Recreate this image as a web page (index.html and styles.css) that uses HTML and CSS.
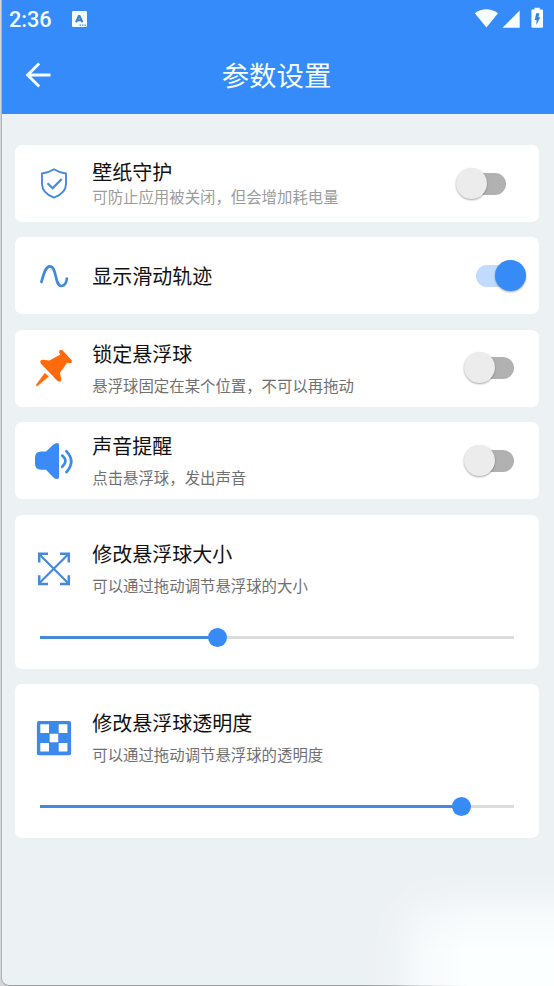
FILE: index.html
```html
<!DOCTYPE html>
<html lang="zh-CN">
<head>
<meta charset="utf-8">
<title>参数设置</title>
<link rel="stylesheet" href="styles.css">
</head>
<body>
<div class="screen">
  <header class="header">
    <div class="status">
      <span class="time">2:36</span>
      <svg class="ime" width="15" height="16" viewBox="0 0 15 16"><rect width="15" height="16" rx="1.2" fill="#f5ffff"/><path d="M4 11.200 7.200 4.500 10.400 11.200M5.200 9.200h4" fill="none" stroke="#3f7fd0" stroke-width="2.100" stroke-linejoin="bevel"/><path d="M7.500 14.200h1.500M10 14.200h1.500M12.500 14.200h1.300" stroke="#4a8be0" stroke-width="1.200"/></svg>
      <svg class="signals" width="70" height="22" viewBox="0 0 70 22" fill="#f8ffff"><path d="M.8 6.200C7.500 .9 17.200 .9 24 6.200L12.400 20.400Z"/><path d="M45.700 3.500V20.700H28.500Z"/><path d="M60.500 .8h5.300v1.700h2.200q1 0 1 1v16.200q0 1-1 1h-9.600q-1 0-1-1V3.500q0-1 1-1h2.100Z"/><path d="M62.200 6.300h3.300l-1.100 4h2l-4.200 7.700.4-5.100h-1.900Z" fill="#3a80d8"/></svg>
    </div>
    <div class="toolbar">
      <svg class="back" width="26" height="26" viewBox="0 0 26 26" fill="none" stroke="#f5ffff" stroke-width="2.900"><path d="M25.500 13H3M14.200 1.500 2.600 13l11.600 11.500"/></svg>
      <h1>参数设置</h1>
    </div>
  </header>

  <main class="settings">
    <section class="card">
      <div class="row">
        <svg class="icon" viewBox="0 0 40 40" fill="none" stroke="#4789da"><path d="M20 5.200Q26 9 32 9.500V20Q32 29 20 33.700Q8 29 8 20V9.500Q14 9 20 5.200Z" stroke-width="1.900" stroke-linejoin="round"/><path d="m13.500 19.300 5.200 5 9-9.300" stroke-width="2.200"/></svg>
        <div class="copy compact"><h2>壁纸守护</h2><p>可防止应用被关闭，但会增加耗电量</p></div>
        <div class="switch inset"></div>
      </div>
    </section>

    <section class="card">
      <div class="row">
        <svg class="icon" viewBox="0 0 40 40" fill="none" stroke="#4488dd" stroke-width="2.700" stroke-linecap="round"><path d="M7.400 26C9.200 20 11 10.300 16 10.300C23 10.300 20.500 30 27.200 30C31 30 32.700 25.500 32.900 22.500"/></svg>
        <div class="copy single"><h2>显示滑动轨迹</h2></div>
        <div class="switch on"></div>
      </div>
    </section>

    <section class="card">
      <div class="row">
        <svg class="icon" viewBox="0 0 40 40" fill="#ff6b0b"><path d="M25 4.500Q25 1 28.200 2L37.500 12Q39 15.500 35 15.200L33.200 14.700 26 24.700 27.300 31.500Q27 35.200 23.500 33L6.800 15.500Q5 11.700 9 11.700L15.500 12.500 26.300 6.500Z"/><path d="M10.800 25.200 14.500 28.600 3.200 38 2.200 37Z" stroke="#ff6b0b" stroke-width=".6"/></svg>
        <div class="copy"><h2>锁定悬浮球</h2><p>悬浮球固定在某个位置，不可以再拖动</p></div>
        <div class="switch"></div>
      </div>
    </section>

    <section class="card">
      <div class="row">
        <svg class="icon" viewBox="0 0 40 40" fill="#3b8bf6"><path d="M7 10.500H12L19.500 3.500Q21 2 23.200 2Q25 2 25 4V36Q25 38 23.200 38Q21 38 19.500 36.500L12 28.700H7Q1 28.700 1 23V16.500Q1 10.500 7 10.500Z"/><path d="M28.300 14.600Q34.500 20 28.300 25.800M32.500 10.300Q42 20.500 32.500 31" fill="none" stroke="#3b8bed" stroke-width="2.700" stroke-linecap="round"/></svg>
        <div class="copy"><h2>声音提醒</h2><p>点击悬浮球，发出声音</p></div>
        <div class="switch"></div>
      </div>
    </section>

    <section class="card tall">
      <div class="row">
        <svg class="icon" viewBox="0 0 40 40" fill="none" stroke="#4688dc" stroke-width="2.500"><path d="M5 5 34.500 34.500M34.500 5 5 34.500" stroke-width="2.200"/><path d="M5.200 13.500V4.700H14M26 4.700H34.800V13.500M34.800 26.200V35H26M14 35H5.200V26.200"/></svg>
        <div class="copy"><h2>修改悬浮球大小</h2><p>可以通过拖动调节悬浮球的大小</p></div>
      </div>
      <div class="slider"><div class="fill" style="width:37.500%"></div><div class="knob"></div></div>
    </section>

    <section class="card tall">
      <div class="row">
        <svg class="icon" viewBox="0 0 40 40"><rect x="2.900" y="3" width="34.200" height="34.200" rx="2" fill="#3c89ee"/><path d="M6.300 6.300h8.700v8.700H6.300zM24.700 6.300h8.700v8.700h-8.700zM15.700 15.700h8.500v8.500h-8.500zM6.300 24.900h8.700v8.700H6.300zM24.700 24.900h8.700v8.700h-8.700z" fill="#fff"/></svg>
        <div class="copy"><h2>修改悬浮球透明度</h2><p>可以通过拖动调节悬浮球的透明度</p></div>
      </div>
      <div class="slider"><div class="fill" style="width:89%"></div><div class="knob"></div></div>
    </section>
  </main>
</div>
<div class="glow"></div>
</body>
</html>
```
FILE: styles.css
```css
* { box-sizing: border-box; }
body {
  position: relative;
  height: 986px;
  margin: 0;
  background: #d4d5d9;
  font-family: "Noto Sans CJK SC", sans-serif;
  overflow: hidden;
}
.screen {
  height: 986px;
  border-left: 1px solid #b0b3b7;
  border-bottom: 1px solid #9fa2a5;
  border-bottom-left-radius: 8px;
  margin-left: 1px;
  background: #ecf1f4;
  overflow: hidden;
}
.header { height: 114px; background: #368bfb; color: #f5ffff; }
.status { display: flex; height: 38px; padding: 7px 10px 0 7px; align-items: flex-start; }
.time { width: 63px; font: 500 21.700px/25px Roboto, sans-serif; }
.ime { margin-top: 4px; }
.signals { margin-left: auto; }
.toolbar {
  display: grid;
  grid-template-columns: 26px 1fr 26px;
  align-items: center;
  height: 76px;
  padding: 0 25px 0 23px;
}
.back { margin-bottom: 2px; }
h1 { margin: 0 1px 4px 0; font-size: 27.400px; line-height: 40px; font-weight: 400; text-align: center; }
.settings {
  display: flex;
  flex-direction: column;
  gap: 15.400px;
  padding: 31px 15px 0 13.300px;
}
.card { height: 77px; border-radius: 7px; background: #fff; }
.row { display: flex; height: 77px; align-items: center; padding: 0 13px 0 19px; }
.icon { width: 40px; height: 40px; flex: none; margin-right: 18px; }
.copy { flex: 1; padding-bottom: 3px; white-space: nowrap; }
h2 { margin: 0; font-size: 20px; line-height: 30px; font-weight: 400; color: #111; }
p { margin: 3px 0 -3px; font-size: 15.400px; line-height: 26px; font-weight: 400; color: #707070; }
.single { padding: 0; }
.compact { padding: 2px 0 0; }
.compact h2 { line-height: 26px; }
.compact p { margin: 0 0 3px; line-height: 23px; color: #9c9c9c; }
.switch {
  position: relative;
  width: 38.500px;
  height: 22px;
  margin-right: 12px;
  border-radius: 11px;
  background: #b1b1b1;
}
.switch::after {
  content: "";
  position: absolute;
  left: -12px;
  top: -5px;
  width: 31px;
  height: 31px;
  border-radius: 50%;
  background: #ececec;
  box-shadow: 0 1px 2px rgba(0, 0, 0, .35);
}
.inset { margin-right: 20px; }
.on { background: #c0dbff; }
.on::after { left: 19.500px; background: #368bf7; }
.tall { height: 154px; }
.tall .row { height: 108px; }
.slider {
  display: flex;
  align-items: center;
  height: 30px;
  margin: 0 25px 0 24.700px;
  background: linear-gradient(#dcdcdc, #dcdcdc) center / 100% 3px no-repeat;
}
.fill { height: 3px; background: #4688d9; }
.knob { width: 19px; height: 19px; margin-left: -9.500px; border-radius: 50%; background: #368bf7; }
.glow {
  position: absolute;
  right: 0;
  bottom: 0;
  width: 189px;
  height: 120px;
  background: #fcffff;
  mask-image:
    linear-gradient(to right, transparent 0, rgba(0, 0, 0, .2) 16%, rgba(0, 0, 0, .65) 30%, #000 55%),
    linear-gradient(to bottom, transparent 0, rgba(0, 0, 0, .2) 22%, rgba(0, 0, 0, .65) 42%, #000 72%);
  mask-composite: intersect;
}
.glow::before {
  content: "";
  position: absolute;
  left: 0;
  bottom: 0;
}
```
